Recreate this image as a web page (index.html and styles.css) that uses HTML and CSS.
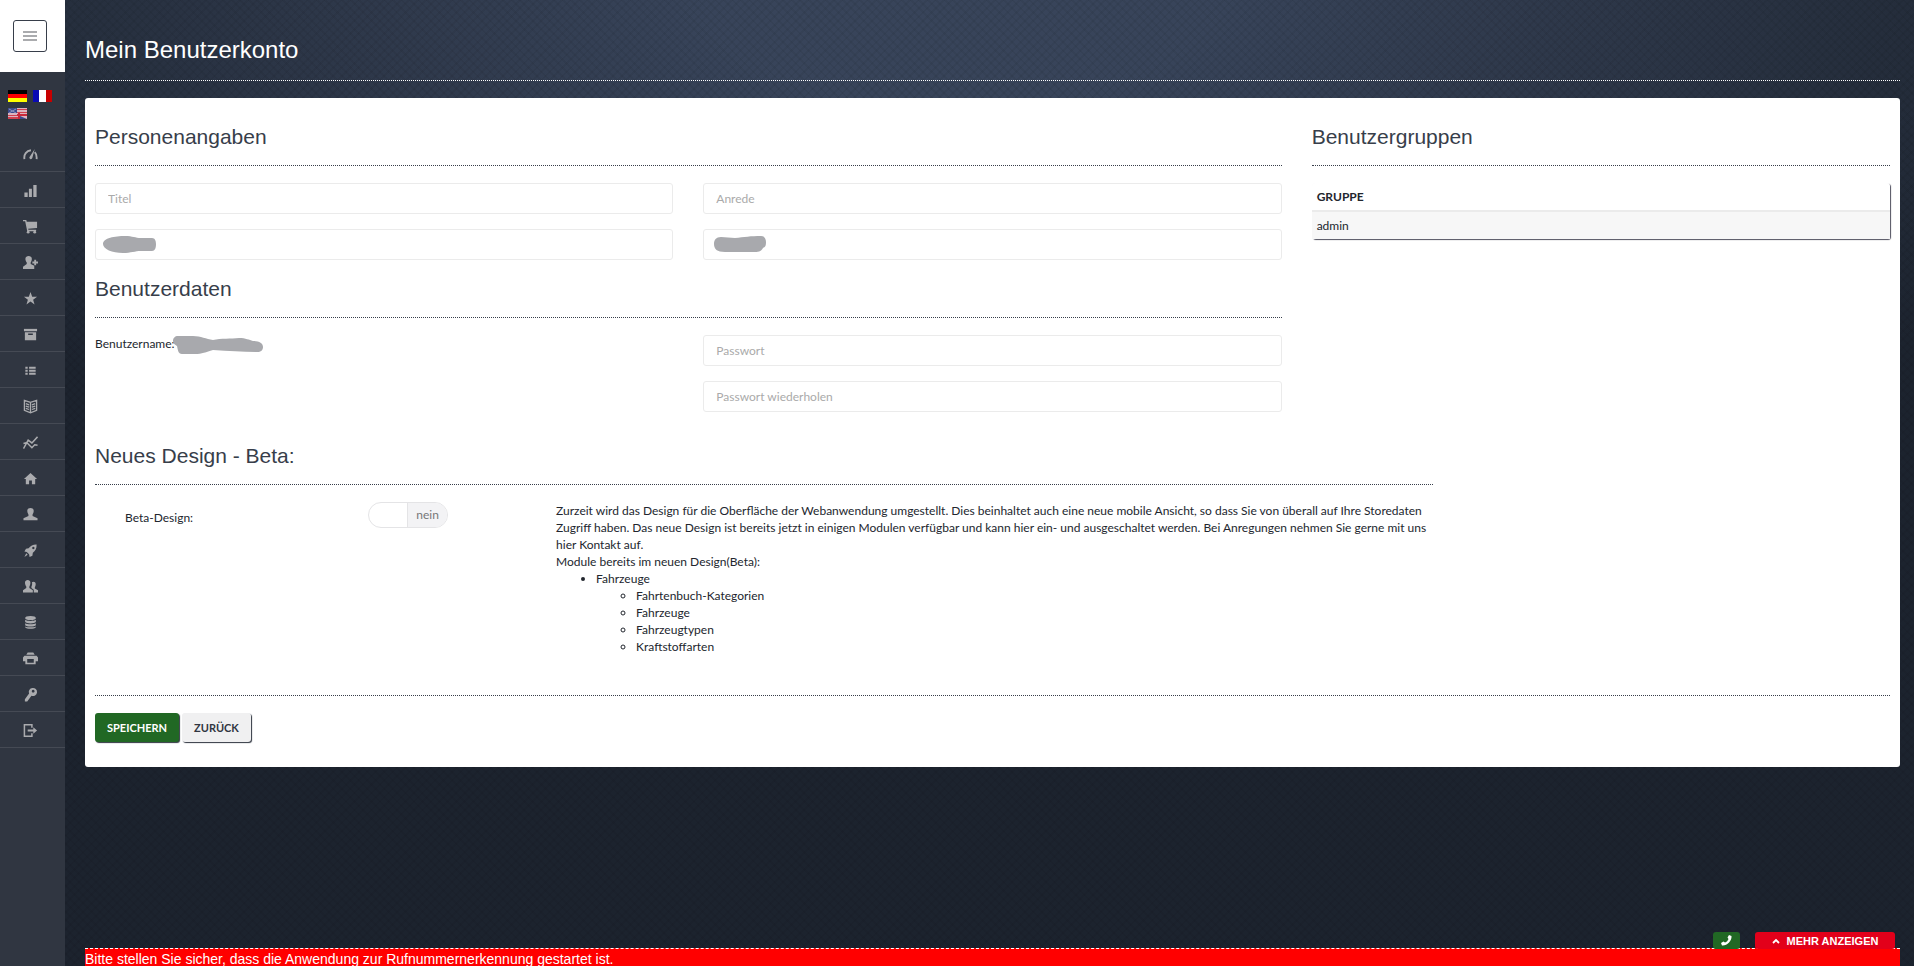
FILE: index.html
```
<!DOCTYPE html>
<html lang="de">
	<head>
		<meta charset="UTF-8">
		<meta content="width=device-width, initial-scale=1.0" name="viewport">
		<link rel="stylesheet" href="styles.css">
		<title>Mein Benutzerkonto</title>
	</head>
	<body>
		<aside class="sidebar">
			<div class="sidebar-top">
				<button class="menu-toggle" type="button" aria-label="Menü">
					<span></span><span></span><span></span>
				</button>
			</div>
			<div class="languages">
				<a href="#" aria-label="Deutsch"><svg width="19" height="12" viewBox="0 0 19 12"><path fill="#000" d="M0 0h19v4H0z"/><path fill="#f00" d="M0 4h19v4H0z"/><path fill="#ff0" d="M0 8h19v4H0z"/></svg></a>
				<a href="#" aria-label="Français"><svg width="19" height="12" viewBox="0 0 19 12"><path fill="#0a0ab4" d="M0 0h6v12H0z"/><path fill="#fff" d="M6 0h7v12H6z"/><path fill="#c80000" d="M13 0h6v12h-6z"/></svg></a>
				<a href="#" aria-label="English"><svg width="19" height="11" viewBox="0 0 19 11"><path fill="#dcb4c0" d="M0 0h19v11H0z"/><path fill="#d0404f" d="M9 1h10v1H9zM9 4h10v1H9zM0 7h10v1H0zM0 9h10v2H0z"/><path fill="#3c4a8c" d="M0 0h9v5H0zM12 8l7 3h-7z"/><path stroke="#8d94c0" d="M1 1l7 4M8 1L1 5"/><path fill="#c8283c" d="M9 6h10v2H9zM10 5h2v6h-2z"/></svg></a>
			</div>
			<nav class="menu">
				<a href="#" aria-label="Dashboard"><svg viewBox="0 0 16 16"><path fill="none" stroke="currentColor" stroke-width="2" d="M1.500 13c-.8-5 2.200-9 7-9.500M12.500 5.500c1.800 1.700 2.300 4.500 2 7.500"/><path d="M12.500 2L10 11.500c-.3 2-3.500 2-3.200-.5z"/></svg></a>
				<a href="#" aria-label="Statistik"><svg viewBox="0 0 16 16"><path d="M1.500 10H5v5H1.500zM6.300 6h3.200v9H6.300zM11 2h3.500v13H11z"/></svg></a>
				<a href="#" aria-label="Einkauf"><svg viewBox="0 0 16 16"><path d="M0 1h3.500l.5 2h11v6.500L5.500 10.500l.3 1H14V13H4.500L2.300 2.500H0z"/><circle cx="5.500" cy="14" r="1.500"/><circle cx="12.500" cy="14" r="1.500"/></svg></a>
				<a href="#" aria-label="Benutzer hinzufügen"><svg viewBox="0 0 16 16"><path d="M6 1c4 0 4.200 4 2.200 7v1.500L12 11.500V15H0v-2.500l4-3V8C1.800 5 2 1 6 1zM12 5h2v2h2v2h-2v2h-2V9h-2V7h2z"/></svg></a>
				<a href="#" aria-label="Favoriten"><svg viewBox="0 0 16 16"><path d="M8 1l1.800 5H15l-4.200 3.200L12.300 14.500 8 11.300l-4.300 3.200 1.500-5.300L1 6h5.200z"/></svg></a>
				<a href="#" aria-label="Archiv"><svg viewBox="0 0 16 16"><path d="M1 2h14v2.500H1z"/><path fill-rule="evenodd" d="M2 5.500h12V14H2zM5.500 7v1.500h5V7z"/></svg></a>
				<a href="#" aria-label="Liste"><svg viewBox="0 0 16 16"><path d="M2.500 4H5v2H2.500zM6.500 4h7v2h-7zM2.500 7.200H5v2H2.500zM6.500 7.200h7v2h-7zM2.500 10.400H5v2H2.500zM6.500 10.400h7v2h-7z"/></svg></a>
				<a href="#" aria-label="Buch"><svg viewBox="0 0 16 16"><path fill="none" stroke="currentColor" stroke-width="1.400" d="M8 3.500L1.500 1.500v10.500L8 14.800l6.500-2.800V1.500zM8 3.500v11M3 5l3.500 1.200M3 7.500l3.500 1.200M3 10l3.500 1.200M13 5L9.500 6.200M13 7.500L9.500 8.700M13 10l-3.500 1.200"/></svg></a>
				<a href="#" aria-label="Trends"><svg viewBox="0 0 16 16"><path fill="none" stroke="currentColor" stroke-width="1.600" d="M.5 14.500l5-9 4 3L15.500 2M.5 9l3.500-1 5.500 5.500 3-3 3 .5"/></svg></a>
				<a href="#" aria-label="Start"><svg viewBox="0 0 16 16"><path d="M8 2l7 6.500h-2V14H9.500v-4h-3v4H3V8.500H1z"/></svg></a>
				<a href="#" aria-label="Profil"><svg viewBox="0 0 16 16"><path d="M8 1c4 0 4.200 4 2.200 7v1.500l5.300 2.500V14H.5v-2l5.300-2.500V8C3.800 5 4 1 8 1z"/></svg></a>
				<a href="#" aria-label="Rakete"><svg viewBox="0 0 16 16"><path fill-rule="evenodd" d="M14.500 1.500c.3 4-1.500 7-4 9l-.5 3L7 15l-.5-3-2.500-2.500L1.500 9l1.700-3 2.800-.5c2-2.500 5-4.200 8.500-4zM11 4a1.300 1.300 0 1 0 .1 0zM3.500 11l1.500 1.500L1.500 15z"/></svg></a>
				<a href="#" aria-label="Gruppen"><svg viewBox="0 0 16 16"><path d="M5 1c3.500 0 3.500 4 1.800 7v1.500L10.500 12v2.500H0V12l3.500-2.500V8C1.500 5 1.500 1 5 1zM11 3c3.300 0 3 3.500 1.600 6v1l3.400 2v2.500h-4.500v-3L9 9.500V8c.8-1.500 1-3 .5-4.500z"/></svg></a>
				<a href="#" aria-label="Daten"><svg viewBox="0 0 16 16"><ellipse cx="8" cy="3.200" rx="5.700" ry="2.200"/><path d="M2.300 5c2 1.700 9.400 1.700 11.400 0v2.500c-1.500 2-9.900 2-11.400 0zM2.300 8.800c2 1.500 9.400 1.500 11.400 0v2c-1.500 1.900-9.900 1.900-11.400 0zM2.300 12.200c2 1.300 9.400 1.300 11.400 0v.8c-1.500 2.300-9.900 2.300-11.400 0z"/></svg></a>
				<a href="#" aria-label="Drucken"><svg viewBox="0 0 16 16"><path fill-rule="evenodd" d="M5 1.500h6L12.500 4h-9zM1.500 5h13L16 7v4h-2.500v3h-11v-3H0V7zM4.500 8.500v4h7v-4z"/></svg></a>
				<a href="#" aria-label="Zugang"><svg viewBox="0 0 16 16"><path fill-rule="evenodd" d="M10 1a4.300 4.300 0 1 1-1 8.200L4.500 15.500 2 15.500V13l4.500-6A4.300 4.300 0 0 1 10 1zM10.800 3a1.500 1.500 0 1 0 .1 0z"/></svg></a>
				<a href="#" aria-label="Abmelden"><svg viewBox="0 0 16 16"><path fill="none" stroke="currentColor" stroke-width="1.600" d="M9.500 5V1.800h-8v12.400h8V11"/><path d="M5 7h6V4.500L15 8l-4 3.500V9H5z"/></svg></a>
			</nav>
		</aside>

		<div class="page">
			<main>
				<h1>Mein Benutzerkonto</h1>
				<form class="card">
					<div class="columns">
						<section class="person">
							<h2>Personenangaben</h2>
							<div class="fields">
								<input type="text" placeholder="Titel" aria-label="Titel">
								<input type="text" placeholder="Anrede" aria-label="Anrede">
								<div class="field">
									<input type="text" aria-label="Vorname">
									<svg class="scribble" width="54" height="18" viewBox="0 0 54 18"><path d="M0 9C0 3 12 1 22 1c8 0 10 2 16 2h11c3 0 4 3 4 6 0 4-1 7-4 7H38c-6 0-10 2-18 2C9 18 0 14 0 9z"/></svg>
								</div>
								<div class="field">
									<input type="text" aria-label="Nachname">
									<svg class="scribble" width="56" height="18" viewBox="0 0 56 18"><path d="M3 9c0-4 2-7 7-7l14 1c9-1 16-2 26-2 4 0 5 4 5 6 0 4-1 5-3 6-2 4-5 4-10 4H14C6 17 3 14 3 9z"/></svg>
								</div>
							</div>
							<h2>Benutzerdaten</h2>
							<div class="fields">
								<p class="username">Benutzername:<svg width="91" height="18" viewBox="0 0 91 18"><path d="M0 5c0-3 2-5 5-5h15c8 0 13 3 20 4 8-2 18-1 26-2 7 0 10 2 14 3 6 0 10 2 10 6 0 3-2 5-6 5-14 0-28-1-44-2-7 2-11 4-18 4H9c-4 0-4-4-5-8-2-1-4-3-4-5z"/></svg></p>
								<div class="passwords">
									<input type="password" placeholder="Passwort" aria-label="Passwort">
									<input type="password" placeholder="Passwort wiederholen" aria-label="Passwort wiederholen">
								</div>
							</div>
						</section>
						<section class="groups">
							<h2>Benutzergruppen</h2>
							<table>
								<thead>
									<tr><th>GRUPPE</th></tr>
								</thead>
								<tbody>
									<tr><td>admin</td></tr>
								</tbody>
							</table>
						</section>
					</div>

					<section class="beta">
						<h2>Neues Design - Beta:</h2>
						<div class="beta-row">
							<label class="beta-label" for="beta-design">Beta-Design:</label>
							<label class="switch">
								<input id="beta-design" type="checkbox">
								<span>nein</span>
							</label>
							<div class="beta-info">
								<p>Zurzeit wird das Design für die Oberfläche der Webanwendung umgestellt. Dies beinhaltet auch eine neue mobile Ansicht, so dass Sie von überall auf Ihre Storedaten Zugriff haben. Das neue Design ist bereits jetzt in einigen Modulen verfügbar und kann hier ein- und ausgeschaltet werden. Bei Anregungen nehmen Sie gerne mit uns hier Kontakt auf.</p>
								<p>Module bereits im neuen Design(Beta):</p>
								<ul>
									<li>Fahrzeuge
										<ul>
											<li>Fahrtenbuch-Kategorien</li>
											<li>Fahrzeuge</li>
											<li>Fahrzeugtypen</li>
											<li>Kraftstoffarten</li>
										</ul>
									</li>
								</ul>
							</div>
						</div>
					</section>

					<div class="actions">
						<button class="button save" type="button">SPEICHERN</button>
						<button class="button" type="button">ZURÜCK</button>
					</div>
				</form>
			</main>

			<footer>
				<div class="tabs">
					<button class="tab call" type="button" aria-label="Anruf"><svg width="11" height="11" viewBox="0 0 11 11"><path d="M8 0l2.500 1C11 6 6 11 1 10.500L0 8l2.500-1.500L4 7.500C5.500 7 7 5.500 7.500 4l-1-1.500z"/></svg></button>
					<button class="tab more" type="button"><svg width="8" height="6" viewBox="0 0 8 6"><path fill="none" stroke="currentColor" stroke-width="1.800" d="M1 5l3-3 3 3"/></svg>MEHR ANZEIGEN</button>
				</div>
				<p class="notice">Bitte stellen Sie sicher, dass die Anwendung zur Rufnummernerkennung gestartet ist.</p>
			</footer>
		</div>
	</body>
</html>
```
FILE: styles.css
```
* {
    box-sizing: border-box;
}

body {
    display: flex;
    height: 100vh;
    margin: 0;
    overflow: hidden;
    background-color: #1C232E;
    background-image:
        repeating-linear-gradient(45deg, rgba(0, 0, 0, 0.05) 0 2px, transparent 2px 6px),
        repeating-linear-gradient(-45deg, rgba(0, 0, 0, 0.05) 0 2px, transparent 2px 6px),
        radial-gradient(ellipse 1250px 520px at 50% 0, #38445A 20%, #1C232E);
    color: #22262E;
    font-family: Lato, 'Liberation Sans', sans-serif;
    font-size: 12px;
    line-height: 17px;
}

h1, h2 {
    margin: 0;
    font-family: 'Liberation Sans', Arial, sans-serif;
    font-weight: normal;
}

p {
    margin: 0;
}

/* sidebar */

.sidebar {
    flex: none;
    width: 65px;
    background-color: #303641;
}

.sidebar-top {
    height: 72px;
    padding: 20px 13px;
    background-color: #FFF;
}

.menu-toggle {
    display: flex;
    flex-direction: column;
    align-items: center;
    justify-content: center;
    gap: 2px;
    width: 34px;
    height: 32px;
    padding: 0;
    border: 1px solid #373E4A;
    border-radius: 3px;
    background-color: #FFF;
}

.menu-toggle span {
    width: 14px;
    height: 2px;
    background-color: #AAABAE;
}

.languages {
    display: flex;
    flex-wrap: wrap;
    align-content: flex-start;
    gap: 6px;
    height: 64px;
    padding: 18px 8px 0;
}

.languages a {
    display: flex;
}

.menu a {
    display: flex;
    align-items: center;
    height: 36px;
    padding: 2px 0 0 23px;
    border-bottom: 1px solid #454A54;
    color: #AAABAE;
}

.menu svg {
    width: 15px;
    height: 15px;
    fill: currentColor;
}

/* content */

.page {
    display: flex;
    flex: 1;
    flex-direction: column;
    justify-content: space-between;
    min-width: 0;
    padding: 0 14px 0 20px;
}

h1 {
    margin-bottom: 17px;
    padding: 34px 0 14px;
    border-bottom: 1px dotted #FFF;
    color: #FFF;
    font-size: 24px;
    line-height: 32px;
}

.card {
    padding: 0 10px 25px;
    border-radius: 3px;
    background-color: #FFF;
}

h2 {
    margin-bottom: 17px;
    padding: 11px 0 15px;
    border-bottom: 1px dotted #373E4A;
    color: #373E4A;
    font-size: 21px;
    line-height: 26px;
}

.columns {
    display: grid;
    grid-template-columns: repeat(3, 1fr);
    gap: 30px;
    padding-top: 15px;
}

.person {
    grid-column: span 2;
}

.fields {
    display: grid;
    grid-template-columns: 1fr 1fr;
    gap: 15px 30px;
    margin-bottom: 5px;
}

.field {
    position: relative;
}

.scribble {
    position: absolute;
    top: 6px;
    left: 8px;
}

.scribble, .username svg {
    fill: #A8A9AD;
}

.fields input {
    display: block;
    width: 100%;
    height: 31px;
    padding: 6px 12px;
    border: 1px solid #EBEBEB;
    border-radius: 3px;
    font: inherit;
}

input::placeholder {
    color: #AAA;
}

.username svg {
    margin: -2px 0 -2px -2px;
    vertical-align: middle;
}

.passwords {
    display: grid;
    gap: 15px;
}

table {
    width: 100%;
    border-collapse: collapse;
    border-radius: 3px;
    box-shadow: 1px 1px 1px #50505F;
}

th, td {
    padding: 5px;
    text-align: left;
}

th {
    border-bottom: 2px solid #EBEBEB;
}

td {
    background-color: #F7F7F7;
}

.beta {
    width: calc(75% - 8px);
    padding-top: 15px;
}

.beta-row {
    display: grid;
    grid-template-columns: 2fr 2fr 8fr;
    align-items: start;
    padding-bottom: 40px;
}

.beta-label {
    padding: 7px 30px;
}

.beta-info {
    padding-left: 15px;
}

.switch {
    display: flex;
    width: 80px;
    height: 26px;
    margin-left: 50px;
    overflow: hidden;
    border: 1px solid #E4E4E6;
    border-radius: 13px;
    color: #777;
    line-height: 24px;
}

.switch input {
    flex: 1;
    margin: 0;
    appearance: none;
}

.switch span {
    width: 40px;
    border-left: 1px solid #E4E4E6;
    background-color: #F3F3F5;
    text-align: center;
}

ul {
    margin: 0;
    padding-left: 40px;
}

.actions {
    display: flex;
    gap: 3px;
    padding-top: 17px;
    border-top: 1px dotted #373E4A;
}

.button {
    height: 29px;
    padding: 0 12px;
    border: none;
    border-radius: 3px;
    background-color: #F0F0F1;
    box-shadow: 1px 1px 1px #303641;
    color: #303641;
    font: bold 11px Lato, sans-serif;
}

.save {
    background-color: #216824;
    color: #FFF;
}

/* footer */

.tabs {
    display: flex;
    justify-content: flex-end;
    gap: 15px;
    margin-bottom: -1px;
    padding-right: 5px;
}

.tab {
    display: flex;
    position: relative;
    align-items: center;
    justify-content: center;
    gap: 7px;
    height: 17px;
    padding: 0;
    border: none;
    border-radius: 3px;
    color: #FFF;
    font: bold 11px 'Liberation Sans', Arial, sans-serif;
}

.call {
    width: 27px;
    background-color: #216824;
    fill: #FFF;
}

.more {
    width: 140px;
    background-color: #E2001A;
}

.notice {
    height: 18px;
    border-top: 1px dashed #FFF;
    background-color: #F00;
    color: #FFF;
    font-family: 'Liberation Sans', Arial, sans-serif;
    font-size: 14px;
    line-height: 20px;
}
```
